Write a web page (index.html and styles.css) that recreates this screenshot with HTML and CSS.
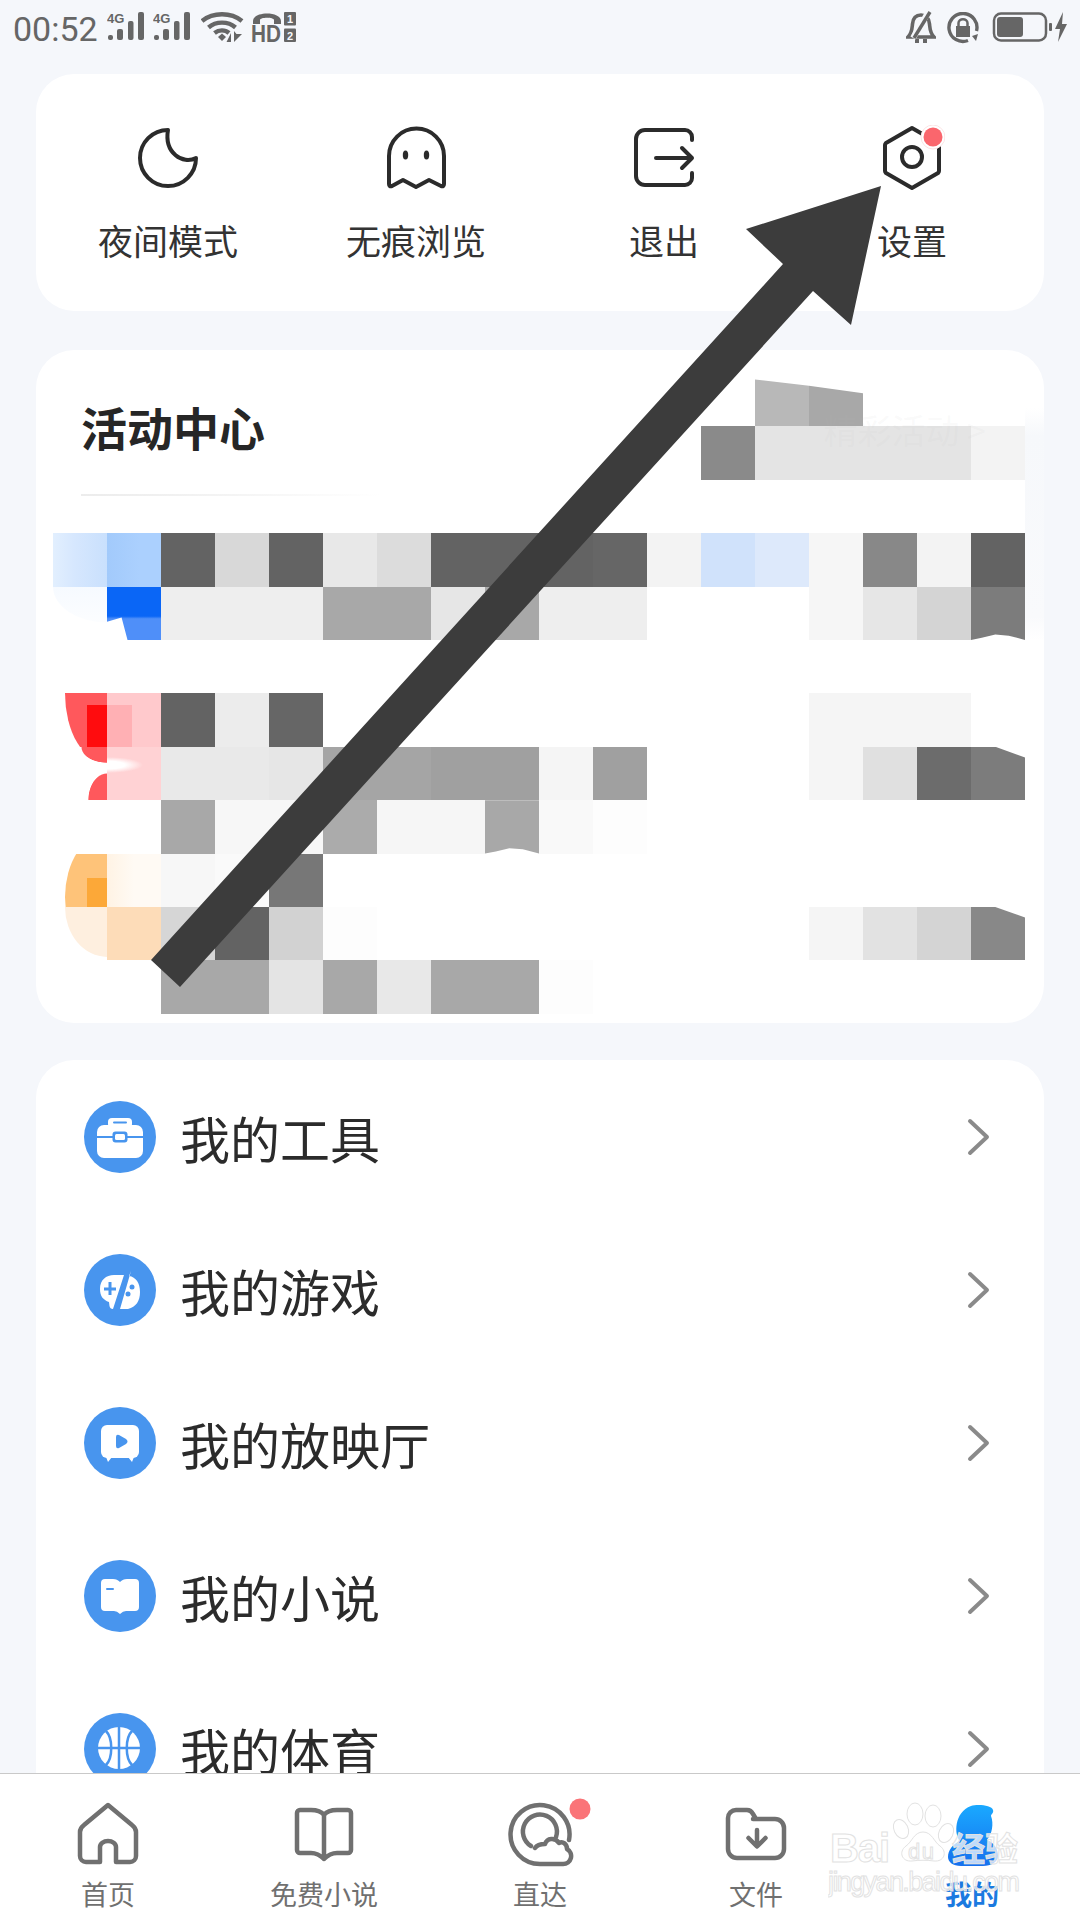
FILE: index.html
```html
<!DOCTYPE html>
<html lang="zh-CN">
<head>
    <meta charset="UTF-8">
    <meta name="viewport" content="width=device-width, initial-scale=1.0">
    <title>我的</title>
    <link rel="stylesheet" href="styles.css">
</head>
<body>
    <div class="page">
        <div class="status-bar">
            <div class="status-left">
                <span class="time">00:52</span>
                <svg class="st sig" viewBox="0 0 38 30"><text x="0" y="10.500" class="net">4G</text><rect x="1" y="23" width="5" height="5" rx="2"/><rect x="10" y="17" width="6" height="11" rx="2"/><rect x="21" y="9" width="5.500" height="19" rx="2"/><rect x="31" y="0" width="6" height="28" rx="2"/></svg>
                <svg class="st sig" viewBox="0 0 38 30"><text x="0" y="10.500" class="net">4G</text><rect x="1" y="23" width="5" height="5" rx="2"/><rect x="10" y="17" width="6" height="11" rx="2"/><rect x="21" y="9" width="5.500" height="19" rx="2"/><rect x="31" y="0" width="6" height="28" rx="2"/></svg>
                <svg class="st wifi" viewBox="0 0 44 30"><path d="M1 9C12 0 30 0 41 9M7.500 15.500C15 9 27 9 34.500 15.500M13.500 21C18 17.500 24 17.500 28 21" fill="none" stroke="#666" stroke-width="4.400"/><path d="M17 25L21 21.500L25 25L21 29Z"/><path d="M30 21L30 30H25.500ZM33 19L33 30L41 22H35.500Z"/></svg>
                <svg class="st hd" viewBox="0 0 45 36"><path d="M2 12V9C2 -1 30 -1 30 9V12H23V8C23 5 9 5 9 8V12Z"/><text x="0" y="30" class="hd-text" textLength="30" lengthAdjust="spacingAndGlyphs">HD</text><rect x="33" y="0" width="12" height="13.500" rx="1"/><rect x="33" y="16.500" width="12" height="13.500" rx="1"/><text x="39" y="11" class="sim">1</text><text x="39" y="27.500" class="sim">2</text></svg>
            </div>
            <div class="status-right">
                <svg class="st bell" viewBox="0 0 30 32"><path d="M2 26C6 22 6 18 6.500 13C7 7 10 4 15 4C20 4 23 7 23.500 13C24 18 24 22 28 26Z" fill="none" stroke="#666" stroke-width="3.600"/><path d="M9 28H13V32H9ZM17 28H21V32H17Z"/><path d="M7 27L23 0" stroke="#f5f7fb" stroke-width="6"/><path d="M8 27L24 1" stroke="#666" stroke-width="3.400"/></svg>
                <svg class="st lock" viewBox="0 0 32 32"><path d="M21 28.500A14 14 0 1 1 29.500 19" fill="none" stroke="#666" stroke-width="3.400"/><path d="M25 24L31 22L29 29Z"/><rect x="9" y="14" width="14" height="11"/><path d="M11.500 14V11C11.500 6 20.500 6 20.500 11V14" fill="none" stroke="#666" stroke-width="2.500"/></svg>
                <svg class="st battery" viewBox="0 0 76 30"><rect x="2" y="1.500" width="52" height="27" rx="7" fill="none" stroke="#666" stroke-width="2.500"/><rect x="5" y="5" width="26" height="20" rx="3"/><rect x="57" y="11" width="3" height="8" rx="1"/><path d="M71 0L63 17H68L66 30L75 12H70Z"/></svg>
            </div>
        </div>

        <div class="card shortcuts">
            <div class="shortcut">
                <svg class="shortcut-icon" viewBox="0 0 66 66"><path d="M33 5A28 28 0 1 0 61 33C48 40 29 28 33 5Z"/></svg>
                <span>夜间模式</span>
            </div>
            <div class="shortcut">
                <svg class="shortcut-icon" viewBox="0 0 66 66"><path d="M6 59V31A27.500 27.500 0 0 1 61 31V59Q61 62 58 61L46 55L33 62L20 55L9 61Q6 62 6 59Z"/><ellipse class="solid" cx="22.500" cy="30" rx="2.700" ry="4.500"/><ellipse class="solid" cx="43.500" cy="30" rx="2.700" ry="4.500"/></svg>
                <span>无痕浏览</span>
            </div>
            <div class="shortcut">
                <svg class="shortcut-icon" viewBox="0 0 66 66"><path d="M61 15V12A7 7 0 0 0 54 5H14A9 9 0 0 0 5 14V51A9 9 0 0 0 14 60H54A7 7 0 0 0 61 53V48"/><path d="M25 33H61M51 23L61 33L51 43"/></svg>
                <span>退出</span>
            </div>
            <div class="shortcut">
                <svg class="shortcut-icon" viewBox="0 0 66 66"><path d="M33 3L59 18Q60 19 60 20V46Q60 47 59 48L33 63L7 48Q6 47 6 46V20Q6 19 7 18Z"/><circle cx="33" cy="32" r="10"/><circle class="dot-ring" cx="54" cy="12" r="12"/><circle class="dot" cx="54" cy="12" r="9.500"/></svg>
                <span>设置</span>
            </div>
        </div>

        <div class="card activity">
            <div class="mosaic">
                <div class="activity-head">
                    <h2>活动中心</h2>
                    <div class="head-line"></div>
                </div>
                <i></i><i class="gb8 slant-a"></i><i class="ga8 slant-b"></i><i></i><i></i><i></i>
                <i class="g8a"></i><i class="ge4"></i><i class="ge4"></i><i class="ge4"></i><i class="ge4"></i><i class="gf3"></i>
                <i></i><i></i><i></i><i></i><i></i><i></i>

                <i class="blue-a"></i><i class="blue-b"></i><i class="g63"></i><i class="gd8"></i><i class="g63"></i><i class="ge8"></i><i class="gdc"></i><i class="g63"></i><i class="g63"></i><i class="g63"></i><i class="g66"></i><i class="gf3"></i><i class="pale-a"></i><i class="pale-b"></i><i class="gf6"></i><i class="g88"></i><i class="gf3"></i><i class="g63"></i>
                <i class="blue-c"></i><i class="blue-d"></i><i class="gee"></i><i class="gee"></i><i class="gee"></i><i class="ga8"></i><i class="ga8"></i><i class="ge6"></i><i class="ga8"></i><i class="gee"></i><i class="gee"></i><i></i><i></i><i></i><i class="gf6"></i><i class="ge6"></i><i class="gd4"></i><i class="g7c worn"></i>
                <i></i><i></i><i></i><i></i><i></i><i></i><i></i><i></i><i></i><i></i><i></i><i></i><i></i><i></i><i></i><i></i><i></i><i></i>

                <i class="red-a"></i><i class="red-b"></i><i class="g63"></i><i class="gec"></i><i class="g66"></i><i></i><i></i><i></i><i></i><i></i><i></i><i></i><i></i><i></i><i class="gf5"></i><i class="gf5"></i><i class="gf5"></i><i></i>
                <i class="red-c"></i><i class="red-d"></i><i class="ge9"></i><i class="ge9"></i><i class="ge6"></i><i class="ga5"></i><i class="ga5"></i><i class="ga0"></i><i class="ga0"></i><i class="gf5"></i><i class="ga0"></i><i></i><i></i><i></i><i class="gf5"></i><i class="ge0"></i><i class="g6c"></i><i class="g7c cut"></i>
                <i></i><i></i><i class="ga8"></i><i class="gf7"></i><i class="gf7"></i><i class="gab"></i><i class="gf6"></i><i class="gf6"></i><i class="ga8 worn"></i><i class="gf9"></i><i class="gfd"></i><i></i><i></i><i></i><i></i><i></i><i></i><i></i>

                <i class="orange-a"></i><i class="orange-b"></i><i class="gf7"></i><i class="gfa"></i><i class="g77"></i><i></i><i></i><i></i><i></i><i></i><i></i><i></i><i></i><i></i><i></i><i></i><i></i><i></i>
                <i class="orange-c"></i><i class="orange-d"></i><i class="gd6"></i><i class="g63"></i><i class="gd2"></i><i class="gfd"></i><i></i><i></i><i></i><i></i><i></i><i></i><i></i><i></i><i class="gf5"></i><i class="ge2"></i><i class="gd4"></i><i class="g88 cut"></i>
                <i></i><i></i><i class="ga8"></i><i class="ga8"></i><i class="ge4"></i><i class="ga8"></i><i class="ge8"></i><i class="ga8"></i><i class="ga8"></i><i class="gfd"></i><i></i><i></i><i></i><i></i><i></i><i></i><i></i><i></i>
            </div>
            <span class="more-faint">精彩活动 &gt;</span>
            <div class="edge-fade"></div>
        </div>

        <div class="card menu">
            <div class="menu-row">
                <svg class="menu-icon" viewBox="0 0 72 72"><circle class="disc" cx="36" cy="36" r="36"/><rect x="24" y="17" width="24" height="10" rx="4"/><rect class="cut-line" x="29" y="20.500" width="14" height="2" rx="1"/><rect x="13" y="24" width="46" height="33" rx="7"/><rect class="cut-line" x="13" y="35" width="46" height="2"/><rect class="cut-line" x="28.500" y="30.500" width="15" height="11" rx="3"/><rect x="31" y="33" width="10" height="6" rx="1.500"/></svg>
                <span class="menu-label">我的工具</span>
                <svg class="chevron" viewBox="0 0 24 38"><path d="M3 3L20 19L3 35"/></svg>
            </div>
            <div class="menu-row">
                <svg class="menu-icon" viewBox="0 0 72 72"><circle class="disc" cx="36" cy="36" r="36"/><path d="M40 21L29 55Q26 55 25.500 52L25 48C19 46 16 42 16 35C16 26 22 21 30 21Z"/><path d="M47 17L36 55H44C52 53 56 47 56 38C56 29 52 23 45 22Z"/><path class="cut-line" d="M24.500 28H27.500V33.500H32V36.500H27.500V41H24.500V36.500H20V33.500H24.500Z"/><circle class="cut-line" cx="48" cy="33" r="2.500"/><circle class="cut-line" cx="44" cy="40" r="2.500"/></svg>
                <span class="menu-label">我的游戏</span>
                <svg class="chevron" viewBox="0 0 24 38"><path d="M3 3L20 19L3 35"/></svg>
            </div>
            <div class="menu-row">
                <svg class="menu-icon" viewBox="0 0 72 72"><circle class="disc" cx="36" cy="36" r="36"/><rect x="17" y="18" width="38" height="33" rx="6"/><path d="M22 50H28L24 55ZM44 50H50L48 55Z"/><path class="cut-line" d="M32 30Q32 27 35 28L42 32Q45 34.500 42 37L35 41Q32 42 32 39Z"/></svg>
                <span class="menu-label">我的放映厅</span>
                <svg class="chevron" viewBox="0 0 24 38"><path d="M3 3L20 19L3 35"/></svg>
            </div>
            <div class="menu-row">
                <svg class="menu-icon" viewBox="0 0 72 72"><circle class="disc" cx="36" cy="36" r="36"/><path d="M21 19H29C32 19 34 20 36 22C38 20 40 19 43 19H51Q55 19 55 23V47Q55 51 51 51H42Q39 51 36 54Q33 51 30 51H21Q17 51 17 47V23Q17 19 21 19Z"/><rect class="cut-line" x="22" y="28" width="8" height="2" rx="1"/></svg>
                <span class="menu-label">我的小说</span>
                <svg class="chevron" viewBox="0 0 24 38"><path d="M3 3L20 19L3 35"/></svg>
            </div>
            <div class="menu-row">
                <svg class="menu-icon" viewBox="0 0 72 72"><circle class="disc" cx="36" cy="36" r="36"/><circle cx="35" cy="35" r="21"/><path class="ball-line" d="M35 14V56M14 35H56M22 18C29 25 29 45 22 52M48 18C41 25 41 45 48 52"/></svg>
                <span class="menu-label">我的体育</span>
                <svg class="chevron" viewBox="0 0 24 38"><path d="M3 3L20 19L3 35"/></svg>
            </div>
        </div>

        <div class="tab-bar">
            <div class="tab">
                <svg class="tab-icon" viewBox="0 0 66 66"><path d="M33 5L57 25Q61 28 61 32V56A6 6 0 0 1 55 62H41V47A8 6 0 0 0 25 47V62H11A6 6 0 0 1 5 56V32Q5 28 9 25Z"/></svg>
                <span>首页</span>
            </div>
            <div class="tab">
                <svg class="tab-icon" viewBox="0 0 66 66"><path d="M33 15C30 11 24 10 20 10H9A3 3 0 0 0 6 13V50A3 3 0 0 0 9 53H20C25 53 29 55 33 59C37 55 41 53 46 53H57A3 3 0 0 0 60 50V13A3 3 0 0 0 57 10H46C42 10 36 11 33 15ZM33 15V59"/></svg>
                <span>免费小说</span>
            </div>
            <div class="tab">
                <svg class="tab-icon" viewBox="0 0 66 66"><path d="M33 64A29.500 29.500 0 1 1 62 40M33 64H56A8 8 0 0 0 60 49C60 44 56 41 52 43C48 37 40 38 38 44C34 44 30 45 28 48"/><path d="M24 46A17 17 0 1 1 49 37"/><circle class="badge" cx="73" cy="9" r="10.500"/></svg>
                <span>直达</span>
            </div>
            <div class="tab">
                <svg class="tab-icon" viewBox="0 0 66 66"><path d="M5 18A8 8 0 0 1 13 10H24Q28 10 30 14L33 19H52A9 9 0 0 1 61 28V49A9 9 0 0 1 52 58H14A9 9 0 0 1 5 49ZM30 19H33M34 30V46M25.500 38L34 46.500L42.500 38"/></svg>
                <span>文件</span>
            </div>
            <div class="tab tab-active">
                <svg class="tab-icon" viewBox="0 0 66 66">
                    <defs><linearGradient id="meFill" x1="0" y1="0" x2="0" y2="1"><stop offset="0" stop-color="#1aa9ff"/><stop offset="1" stop-color="#1670ee"/></linearGradient></defs>
                    <path class="me" d="M32 6C38 4 53 5 54 10C55 13 52 14 52 16C55 24 53 34 48 40C56 43 59 50 59 56C59 62 52 66 44 66H22C14 66 9 62 9 57C9 50 14 44 21 41C15 35 15 12 32 6Z"/>
                </svg>
                <span>我的</span>
            </div>
        </div>

        <svg class="watermark" viewBox="0 0 200 110">
            <g class="paw" transform="translate(22 6)"><ellipse cx="65" cy="12" rx="8" ry="11"/><ellipse cx="83" cy="14" rx="8" ry="11"/><ellipse cx="51" cy="27" rx="7" ry="10" transform="rotate(-25 51 27)"/><ellipse cx="96" cy="31" rx="7" ry="10" transform="rotate(25 96 31)"/><path d="M73 30C64 30 62 40 56 44C48 50 52 60 62 59C68 58 78 58 84 59C94 60 98 50 90 44C84 40 82 30 73 30Z"/></g>
            <text x="2" y="66" class="wm-big" textLength="60">Bai</text>
            <text x="80" y="63" class="wm-du" textLength="26">du</text>
            <text x="124" y="65" class="wm-cn" textLength="66">经验</text>
            <text x="0" y="95" class="wm-url" textLength="192">jingyan.baidu.com</text>
        </svg>

        <svg class="arrow" viewBox="0 0 1080 1920"><polygon points="881,186 851,325 813,291 180,987 151,960 783,264 746,229"/></svg>
    </div>
</body>
</html>
```

FILE: styles.css
```css
* {
    box-sizing: border-box;
}

body {
    margin: 0;
    font-family: "Noto Sans CJK SC", "Noto Sans", sans-serif;
    background-color: #f5f7fb;
}

.page {
    position: relative;
    width: 1080px;
    height: 1920px;
    overflow: hidden;
}

/* status bar */
.status-bar {
    display: flex;
    justify-content: space-between;
    align-items: flex-start;
    height: 74px;
    padding: 12px 12px 0 13px;
}

.status-left,
.status-right {
    display: flex;
    align-items: flex-start;
}

.time {
    font-family: Roboto, sans-serif;
    font-size: 34px;
    line-height: 34px;
    color: #666;
    margin-right: 9px;
}

.st {
    display: block;
    fill: #666;
}

.sig {
    width: 38px;
    height: 30px;
    margin-right: 8px;
}

.net {
    font-family: "Liberation Sans", sans-serif;
    font-size: 13px;
    font-weight: 700;
}

.wifi {
    width: 44px;
    height: 30px;
    margin-left: 2px;
    margin-right: 6px;
}

.hd {
    width: 45px;
    height: 36px;
}

.hd-text {
    font-family: "Liberation Sans", sans-serif;
    font-size: 23px;
    font-weight: 700;
}

.sim {
    font-family: "Liberation Sans", sans-serif;
    font-size: 11px;
    font-weight: 700;
    fill: #f5f7fb;
    text-anchor: middle;
}

.bell {
    width: 30px;
    height: 32px;
    margin-top: -1px;
    margin-right: 11px;
}

.lock {
    width: 32px;
    height: 32px;
    margin-right: 13px;
}

.battery {
    width: 76px;
    height: 30px;
}

/* cards */
.card {
    margin: 0 36px;
    background: #fff;
    border-radius: 38px;
}

.shortcuts {
    display: grid;
    grid-template-columns: repeat(4, 248px);
    height: 237px;
    padding: 51px 8px 0;
}

.shortcut {
    display: flex;
    flex-direction: column;
    align-items: center;
    font-size: 35px;
    line-height: 44px;
    color: #333;
}

.shortcut-icon {
    width: 66px;
    height: 66px;
    margin-bottom: 27px;
    fill: none;
    stroke: #2b2b2b;
    stroke-width: 4;
    stroke-linecap: round;
    stroke-linejoin: round;
}

.shortcut-icon .solid {
    fill: #2b2b2b;
    stroke: none;
}

.dot-ring {
    fill: #fff;
    stroke: #fbe4e5;
    stroke-width: 1;
}

.dot {
    fill: #fa666d;
    stroke: none;
}

/* activity card with the blurred-out banners */
.activity {
    position: relative;
    height: 673px;
    margin-top: 39px;
    padding: 23px 0 0 17px;
}

.mosaic {
    display: grid;
    grid-template-columns: repeat(18, 54px);
    grid-auto-rows: 53.4px;
}

.mosaic i {
    display: block;
}

.activity-head {
    grid-area: 1 / 1 / 4 / 13;
    padding: 23px 0 0 28px;
}

.activity-head h2 {
    margin: 0;
    font-size: 46px;
    line-height: 60px;
    font-weight: 700;
    color: #262626;
}

.head-line {
    width: 300px;
    height: 2px;
    margin-top: 38px;
    background: linear-gradient(90deg, #ececec, #f4f4f4 50%, #fff);
}

.more-faint {
    position: absolute;
    top: 60px;
    right: 58px;
    font-size: 34px;
    line-height: 40px;
    color: rgba(190, 190, 190, 0.08);
}

.edge-fade {
    position: absolute;
    top: 58px;
    right: 0;
    width: 19px;
    height: 232px;
    background: linear-gradient(#fff, #f6f8fb 12%, #f9fafc 90%, #fff);
}

.g63 { background: #636363; }
.g66 { background: #666; }
.g6c { background: #6c6c6c; }
.g77 { background: #777; }
.g7c { background: #7c7c7c; }
.g88 { background: #888; }
.g8a { background: #8a8a8a; }
.ga0 { background: #a0a0a0; }
.ga5 { background: #a5a5a5; }
.ga8 { background: #a8a8a8; }
.gab { background: #ababab; }
.gb8 { background: #b8b8b8; }
.gd2 { background: #d2d2d2; }
.gd4 { background: #d4d4d4; }
.gd6 { background: #d6d6d6; }
.gd8 { background: #d8d8d8; }
.gdc { background: #dcdcdc; }
.ge0 { background: #e0e0e0; }
.ge2 { background: #e2e2e2; }
.ge4 { background: #e4e4e4; }
.ge6 { background: #e6e6e6; }
.ge8 { background: #e8e8e8; }
.ge9 { background: #e9e9e9; }
.gec { background: #ececec; }
.gee { background: #eee; }
.gf3 { background: #f3f3f3; }
.gf5 { background: #f5f5f5; }
.gf6 { background: #f6f6f6; }
.gf7 { background: #f7f7f7; }
.gf9 { background: #f9f9f9; }
.gfa { background: #fafafa; }
.gfd { background: #fdfdfd; }

.pale-a { background: #d0e2fb; }
.pale-b { background: #dde9fb; }

.slant-a { clip-path: polygon(0 12%, 100% 24%, 100% 100%, 0 100%); }
.slant-b { clip-path: polygon(0 24%, 100% 38%, 100% 100%, 0 100%); }
.worn { clip-path: polygon(0 100%, 0 0, 100% 0, 100% 100%, 70% 92%, 45% 90%, 20% 96%); }
.cut { clip-path: polygon(0 0, 45% 0, 100% 20%, 100% 100%, 0 100%); }

.blue-a { background: linear-gradient(90deg, #e2effe 0, #d6e7fe 40%, #c9e0fd 100%); }
.blue-b { background: linear-gradient(90deg, #a2cafb 0, #abd0fe 60%); }
.blue-c { background: linear-gradient(#f6faff, #fff); clip-path: ellipse(54px 36px at 54px 0); }
.blue-d {
    background: linear-gradient(#0a66f6 55%, #4f8ff9 60%);
    clip-path: polygon(0 0, 100% 0, 100% 100%, 38% 100%, 27% 58%, 0 66%);
}

.red-a {
    background: linear-gradient(#ff0c0e, #ff0c0e) right 12px / 20px 42px no-repeat, #ff585c;
    clip-path: ellipse(42px 70px at 54px 0);
}
.red-b { background: linear-gradient(#ffb0b4, #ffb0b4) left 12px / 25px 42px no-repeat, #ffc9cc; }
.red-c {
    background: radial-gradient(ellipse 26px 16px at 54px 0, #ff585c 96%, transparent),
        radial-gradient(ellipse 19px 27px at 54px 53px, #ff585c 96%, transparent);
}
.red-d { background: radial-gradient(ellipse 36px 8px at 0 18px, #fff 50%, transparent), #ffd2d4; }

.orange-a {
    background: linear-gradient(#fca838, #fca838) right 24px / 20px 30px no-repeat, #fec379;
    clip-path: ellipse(42px 64px at 54px 44px);
}
.orange-b { background: linear-gradient(90deg, #fff3e4, #fffaf4 50%); }
.orange-c {
    background: #feefdf;
    clip-path: ellipse(42px 50px at 54px 0);
}
.orange-d {
    background: #fddcb8;
}

/* menu list */
.menu {
    margin-top: 37px;
    padding: 0 53px 0 48px;
}

.menu-row {
    display: flex;
    align-items: center;
    height: 153px;
}

.menu-icon {
    width: 72px;
    height: 72px;
    flex-shrink: 0;
    fill: #fff;
}

.menu-icon .disc,
.menu-icon .cut-line {
    fill: #4895ee;
}

.ball-line {
    fill: none;
    stroke: #4895ee;
    stroke-width: 2.500;
}

.menu-label {
    flex: 1;
    margin-left: 24px;
    font-size: 50px;
    line-height: 60px;
    color: #2b2b2b;
}

.chevron {
    width: 24px;
    height: 38px;
    fill: none;
    stroke: #8a8a8a;
    stroke-width: 4;
    stroke-linecap: round;
    stroke-linejoin: round;
}

/* bottom tabs */
.tab-bar {
    position: absolute;
    left: 0;
    right: 0;
    bottom: 0;
    display: grid;
    grid-template-columns: repeat(5, 216px);
    height: 147px;
    padding-top: 26px;
    background: #fff;
    border-top: 1px solid #c9c9c9;
}

.tab {
    display: flex;
    flex-direction: column;
    align-items: center;
    font-size: 27px;
    line-height: 36px;
    color: #707070;
}

.tab-icon {
    width: 66px;
    height: 66px;
    margin-bottom: 10px;
    overflow: visible;
    fill: none;
    stroke: #707070;
    stroke-width: 4.500;
    stroke-linecap: round;
    stroke-linejoin: round;
}

.tab-icon .badge {
    fill: #fa7478;
    stroke: none;
}

.tab-active {
    color: #1b7ae0;
    font-weight: 700;
}

.tab-icon .me {
    fill: url(#meFill);
    stroke: none;
}

/* things lying over the whole screenshot */
.watermark {
    position: absolute;
    left: 828px;
    top: 1796px;
    width: 200px;
    height: 110px;
    fill: rgba(255, 255, 255, 0.72);
    stroke: #e2e2e2;
    stroke-width: 1;
}

.paw {
    fill: none;
}

.wm-big {
    font-family: "Liberation Sans", sans-serif;
    font-size: 40px;
    font-weight: 700;
}

.wm-du {
    font-family: "Liberation Sans", sans-serif;
    font-size: 22px;
}

.wm-cn {
    font-size: 33px;
    font-weight: 700;
}

.wm-url {
    font-family: "Liberation Sans", sans-serif;
    font-size: 27px;
}

.arrow {
    position: absolute;
    left: 0;
    top: 0;
    width: 1080px;
    height: 1920px;
    fill: #3c3c3c;
    pointer-events: none;
}
```
